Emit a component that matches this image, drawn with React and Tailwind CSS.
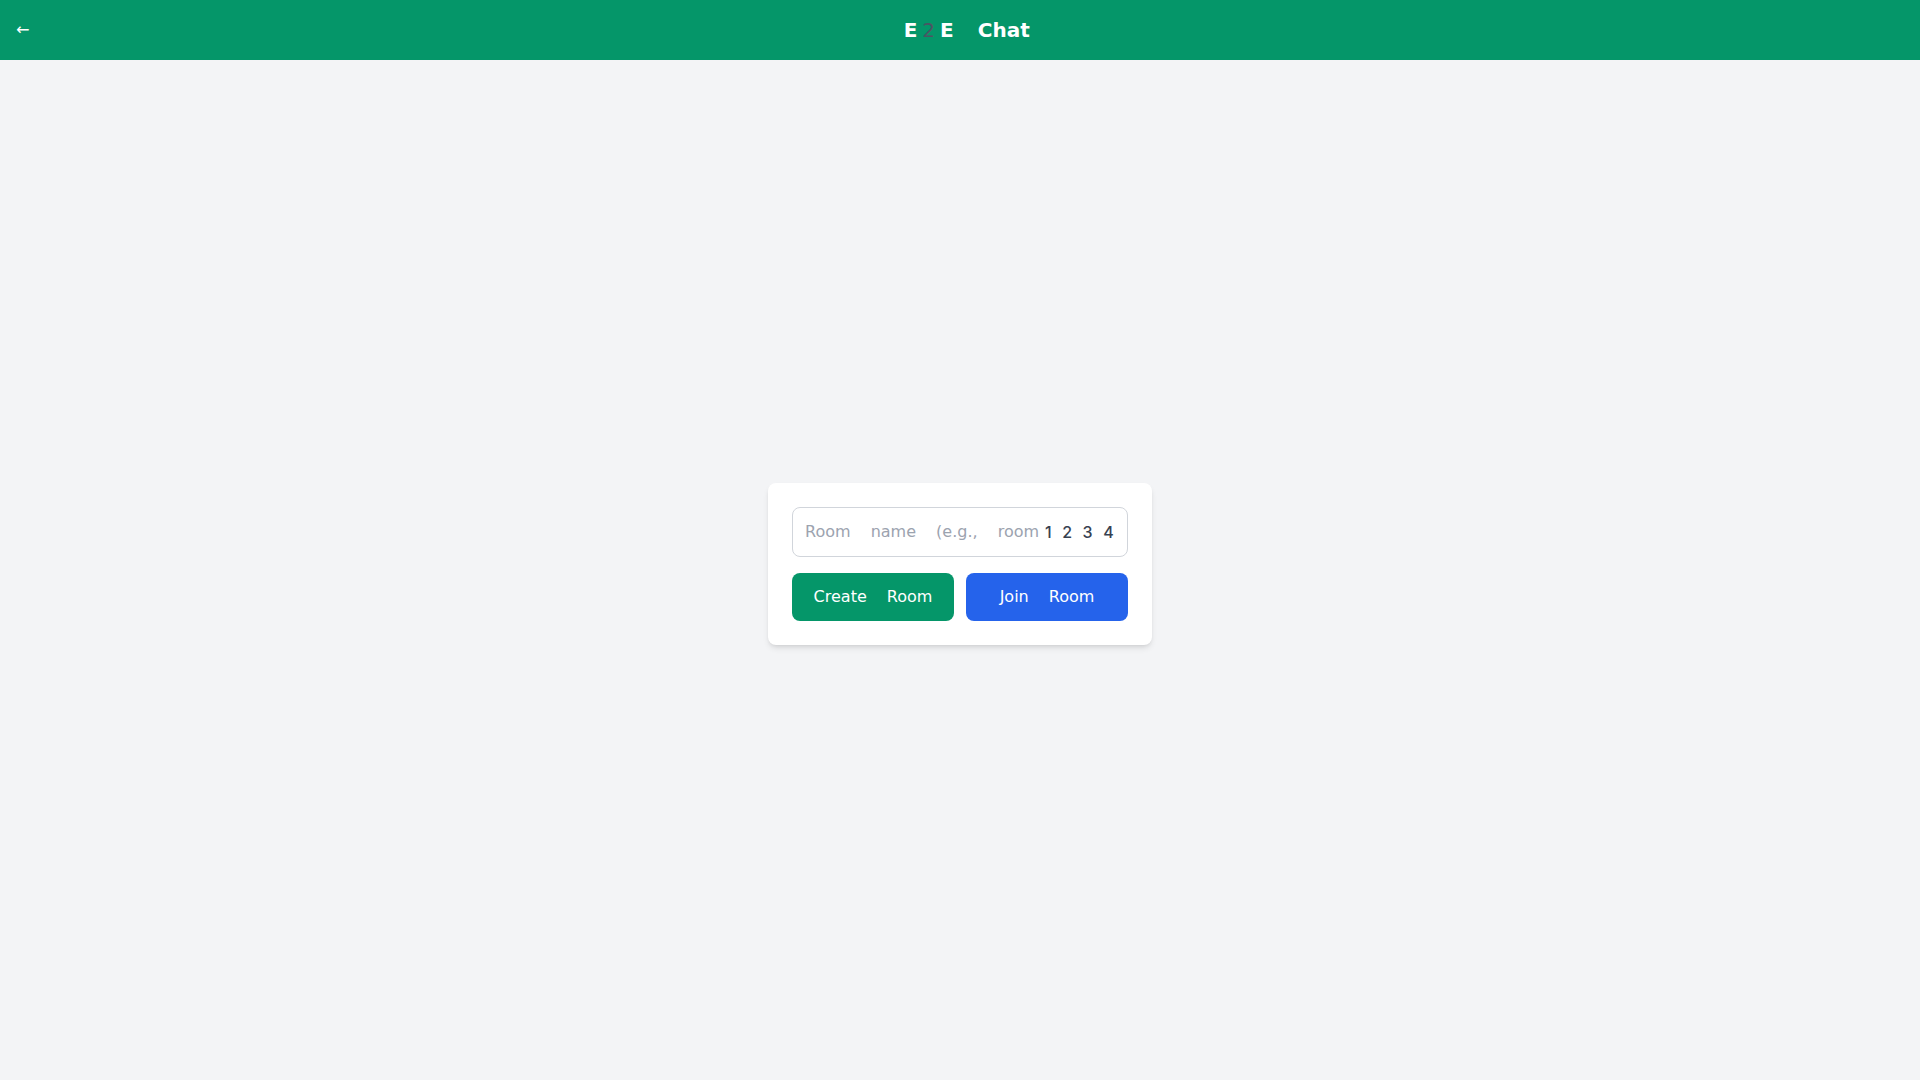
export default function App() {
  return (
    <div className="flex min-h-screen flex-col bg-[#f3f4f6] font-['DejaVu_Sans',sans-serif]">
      <header className="flex h-[60px] items-center bg-[#059669] px-4 text-white">
        <button className="text-base leading-none text-white">←</button>
        <h1 className="flex flex-1 items-center justify-center text-xl font-bold">
          <span>E</span>
          <span className="ml-[5px] font-normal text-[#4b5563]">2</span>
          <span className="ml-[5px]">E</span>
          <span className="ml-[24px]">Chat</span>
        </h1>
      </header>
      <main className="flex flex-1 items-center justify-center pb-[13px]">
        <div className="w-96 rounded-lg bg-white p-6 shadow-md">
          <div className="flex h-[50px] items-center overflow-hidden whitespace-nowrap rounded-lg border border-[#d1d5db] px-3 text-base">
            <span className="shrink-0 text-[#9ca3af] [word-spacing:15px]">Room name (e.g., room</span>
            <span className="ml-[6px] shrink-0 font-['Inter',sans-serif] font-medium tracking-[10.5px] text-[#374151]">1234</span>
          </div>
          <div className="mt-4 grid grid-cols-2 gap-3">
            <button className="h-12 whitespace-nowrap rounded-lg bg-[#059669] text-base text-white [word-spacing:15px]">Create Room</button>
            <button className="h-12 whitespace-nowrap rounded-lg bg-[#2563eb] text-base text-white [word-spacing:15px]">Join Room</button>
          </div>
        </div>
      </main>
    </div>
  );
}
